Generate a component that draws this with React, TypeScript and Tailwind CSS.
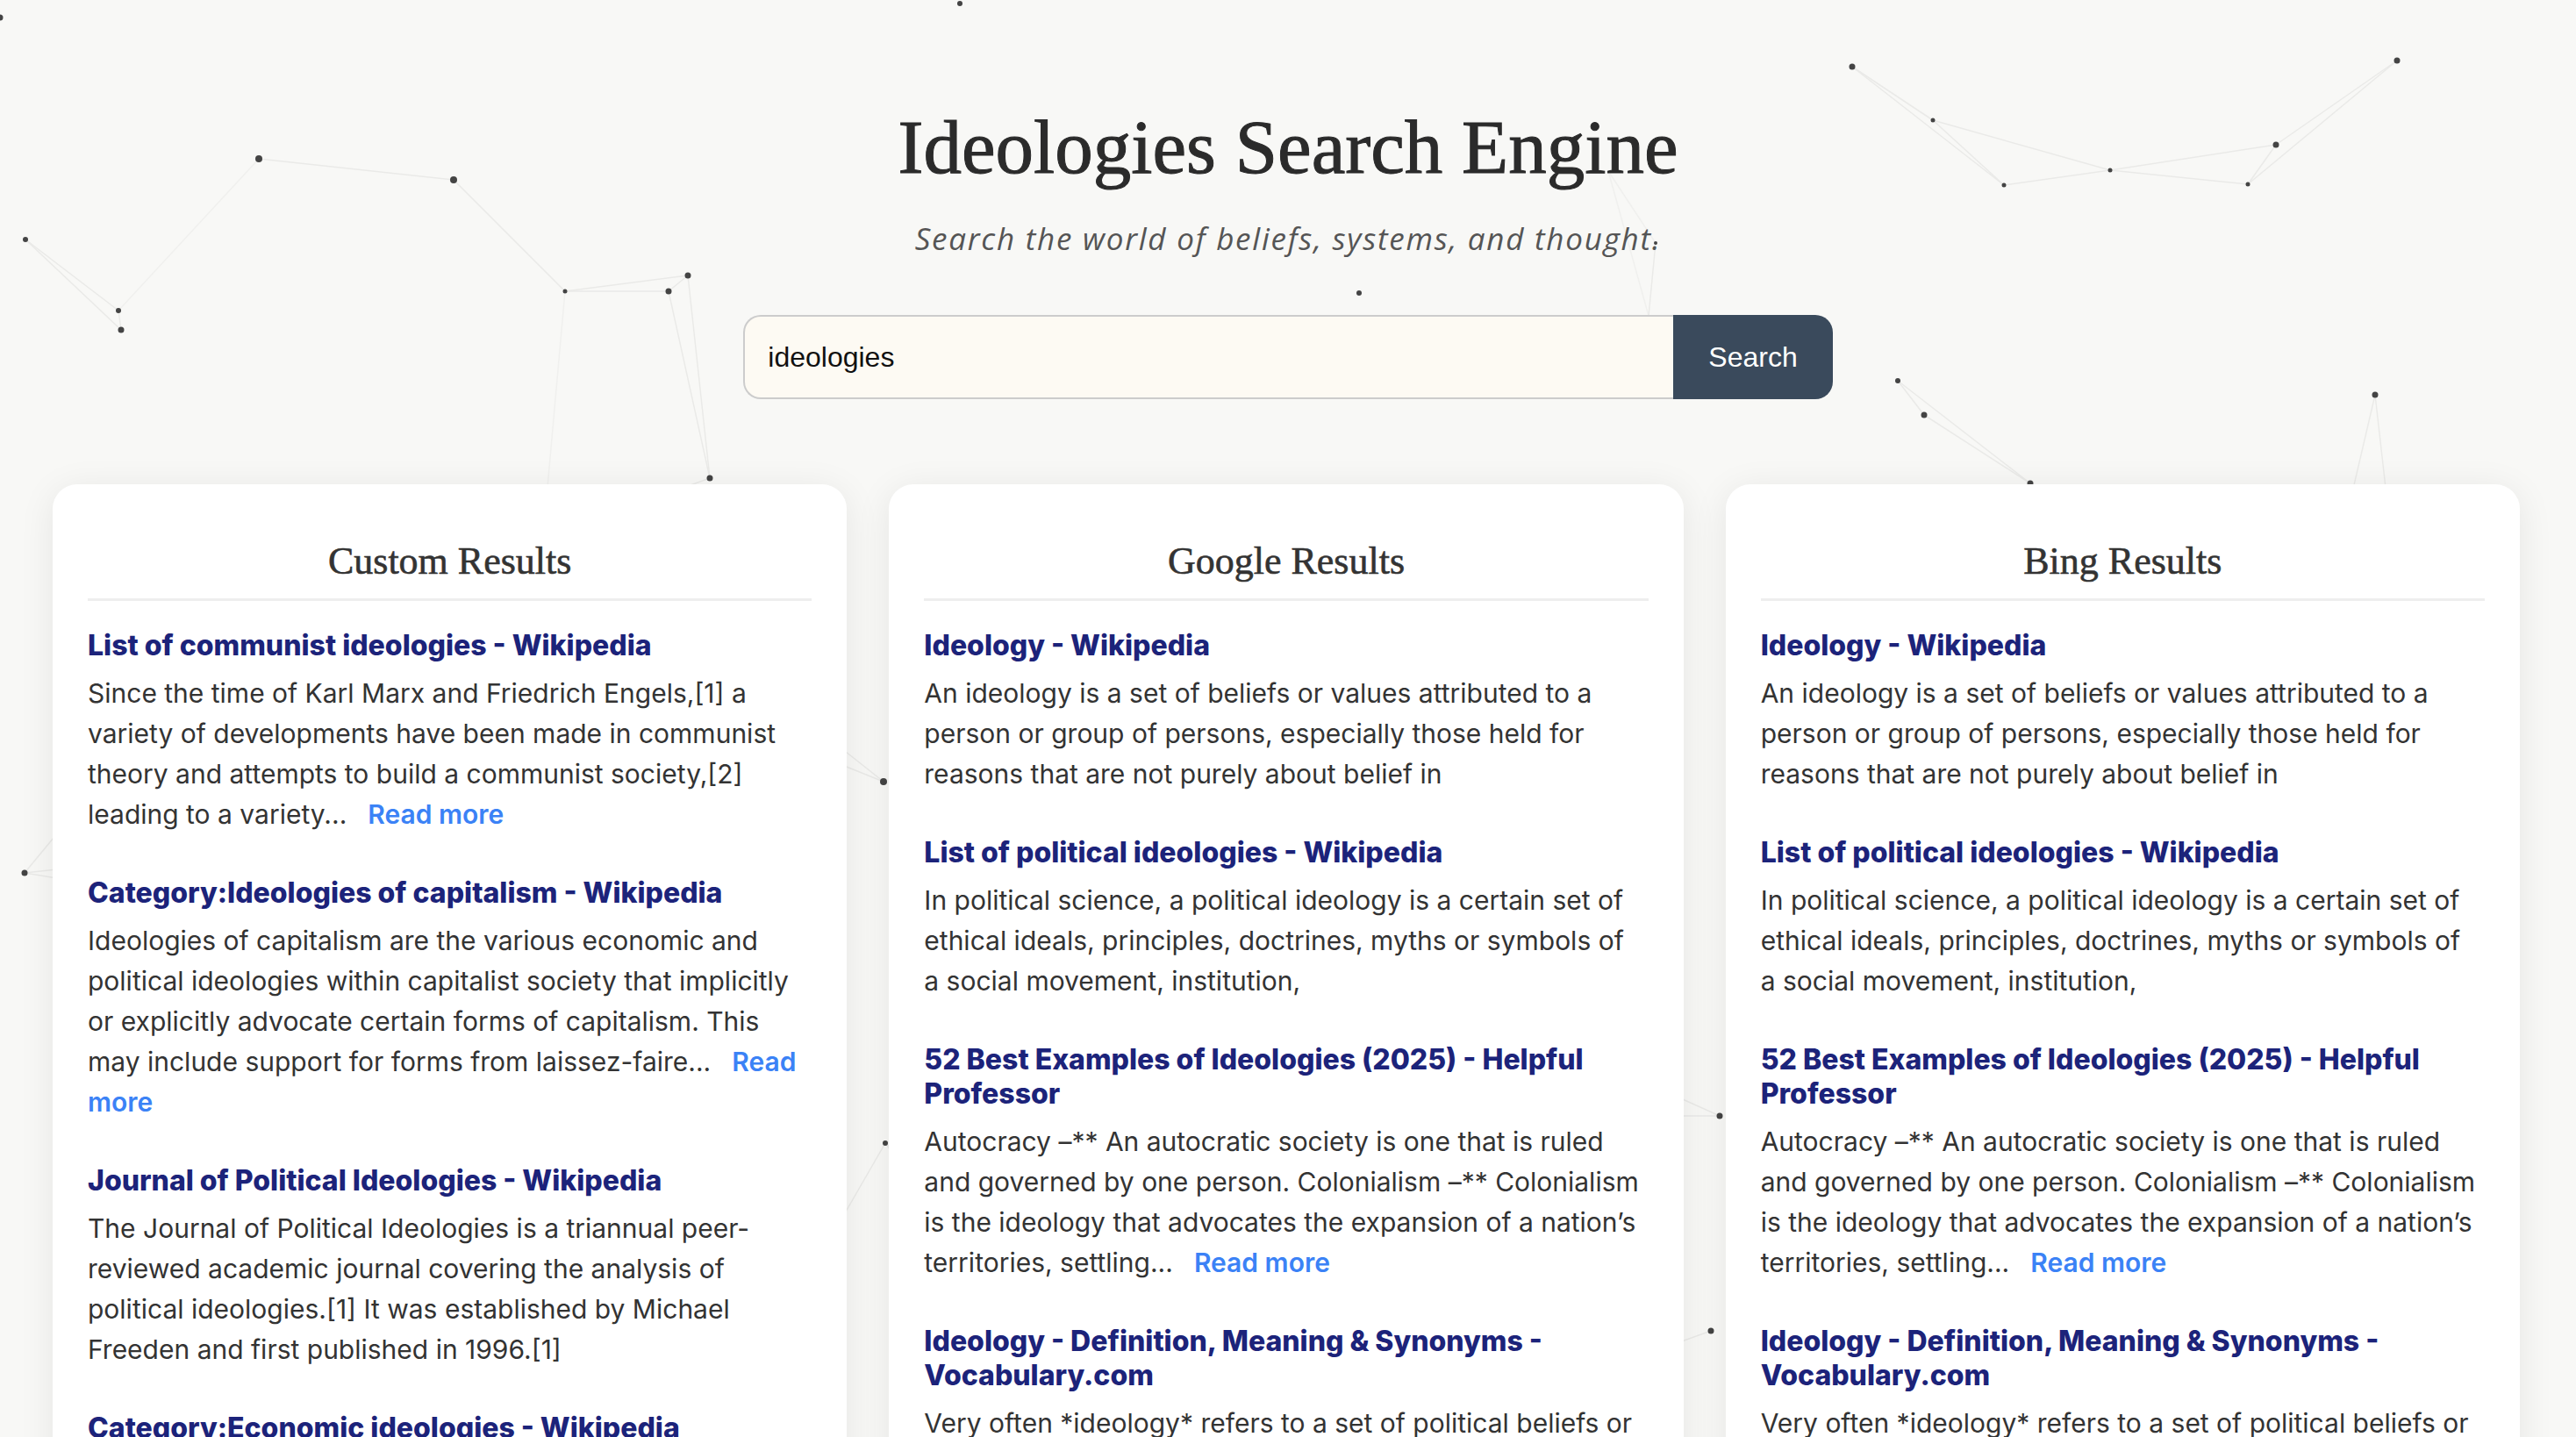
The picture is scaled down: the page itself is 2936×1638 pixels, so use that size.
type Result = {
  title: string;
  snippet: string;
  more?: boolean;
};

const customResults: Result[] = [
  {
    title: "List of communist ideologies - Wikipedia",
    snippet:
      "Since the time of Karl Marx and Friedrich Engels,[1] a variety of developments have been made in communist theory and attempts to build a communist society,[2] leading to a variety...",
    more: true,
  },
  {
    title: "Category:Ideologies of capitalism - Wikipedia",
    snippet:
      "Ideologies of capitalism are the various economic and political ideologies within capitalist society that implicitly or explicitly advocate certain forms of capitalism. This may include support for forms from laissez-faire...",
    more: true,
  },
  {
    title: "Journal of Political Ideologies - Wikipedia",
    snippet:
      "The Journal of Political Ideologies is a triannual peer-reviewed academic journal covering the analysis of political ideologies.[1] It was established by Michael Freeden and first published in 1996.[1]",
  },
  {
    title: "Category:Economic ideologies - Wikipedia",
    snippet:
      "This category contains articles about economic ideologies, schools of economic thought and the political movements built around them.",
  },
];

const webResults: Result[] = [
  {
    title: "Ideology - Wikipedia",
    snippet:
      "An ideology is a set of beliefs or values attributed to a person or group of persons, especially those held for reasons that are not purely about belief in",
  },
  {
    title: "List of political ideologies - Wikipedia",
    snippet:
      "In political science, a political ideology is a certain set of ethical ideals, principles, doctrines, myths or symbols of a\u00a0social movement, institution,",
  },
  {
    title: "52 Best Examples of Ideologies (2025) - Helpful Professor",
    snippet:
      "Autocracy –** An autocratic society is one that is ruled and governed by one person. Colonialism –** Colonialism is the ideology that advocates the expansion of a nation’s territories, settling...",
    more: true,
  },
  {
    title: "Ideology - Definition, Meaning & Synonyms - Vocabulary.com",
    snippet:
      "Very often *ideology* refers to a set of political beliefs or a set of ideas that characterize a particular culture.",
  },
];

// background constellation, canvas coordinates
const nodes: [number, number, number][] = [
  [1094, 4, 3], [295, 181, 4], [517, 205, 4], [29, 273, 3], [135, 354, 3],
  [138, 376, 3.5], [644, 332, 2.5], [762, 332, 3.5], [784, 314, 3.5], [809, 545, 3.5],
  [1549, 334, 3], [1887, 277, 2], [2111, 76, 3.5], [2203, 137, 2.5], [2284, 211, 2.5],
  [2405, 194, 2.5], [2562, 210, 2.5], [2594, 165, 3.5], [2732, 69, 3.5], [2163, 434, 3],
  [2193, 473, 3.5], [2314, 551, 3.5], [2707, 450, 3.5], [28, 995, 3.5], [1007, 891, 4],
  [1009, 1303, 3], [1960, 1272, 3.5], [1950, 1517, 3.5], [0, 20, 3.5],
];

const links: [number, number, number, number][] = [
  [295, 181, 517, 205], [517, 205, 644, 332], [644, 332, 762, 332], [644, 332, 784, 314],
  [784, 314, 762, 332], [29, 273, 135, 354], [29, 273, 138, 376], [135, 354, 138, 376],
  [762, 332, 809, 545], [784, 314, 809, 545], [809, 545, 740, 570],
  [1887, 277, 1879, 360],
  [2111, 76, 2203, 137], [2111, 76, 2284, 211], [2203, 137, 2284, 211], [2203, 137, 2405, 194],
  [2284, 211, 2405, 194], [2405, 194, 2562, 210], [2405, 194, 2594, 165], [2594, 165, 2562, 210],
  [2594, 165, 2732, 69], [2562, 210, 2732, 69], [2163, 434, 2193, 473], [2163, 434, 2314, 551],
  [2193, 473, 2314, 551], [2707, 450, 2672, 600], [2707, 450, 2724, 600],
  [28, 995, 90, 920], [28, 995, 120, 985], [28, 995, 120, 1010],
  [1007, 891, 930, 830], [1007, 891, 930, 860], [1009, 1303, 930, 1440], [1009, 1303, 1080, 1360],
  [1009, 1303, 1080, 1400], [1960, 1272, 1900, 1245], [1960, 1272, 1900, 1272], [1950, 1517, 1900, 1535],
  [2314, 551, 2280, 600],
];

const faintLinks: [number, number, number, number][] = [
  [295, 181, 135, 354], [644, 332, 620, 600], [1833, 195, 1887, 277], [1833, 195, 1879, 360],
];

function Network() {
  return (
    <svg
      className="absolute top-0 left-0 pointer-events-none"
      width={2936}
      height={1638}
      viewBox="0 0 2936 1638"
    >
      {faintLinks.map(([x1, y1, x2, y2], i) => (
        <line key={"f" + i} x1={x1} y1={y1} x2={x2} y2={y2} stroke="#f0f0ee" strokeWidth={1.5} />
      ))}
      {links.map(([x1, y1, x2, y2], i) => (
        <line key={i} x1={x1} y1={y1} x2={x2} y2={y2} stroke="#eaeae8" strokeWidth={1.5} />
      ))}
      {nodes.map(([cx, cy, r], i) => (
        <circle key={i} cx={cx} cy={cy} r={r} fill="#444" />
      ))}
    </svg>
  );
}

function ResultCard({ heading, results }: { heading: string; results: Result[] }) {
  return (
    <div className="bg-white rounded-[28px] shadow-[0_6px_40px_rgba(0,0,0,0.08)] px-[40px] pt-[55px] pb-[40px]">
      <h2 className="text-center text-[44px] leading-[66px] text-[#333] font-['Liberation_Serif',serif] [-webkit-text-stroke:0.6px_#333] pb-[9px] border-b-[3px] border-[#eeeeee]">
        {heading}
      </h2>
      <div className="mt-[31px] flex flex-col gap-[47px]">
        {results.map((r) => (
          <div key={r.title}>
            <a className="block text-[32px] leading-[39px] font-extrabold text-[#1c237a] font-['Inter',sans-serif]">
              {r.title}
            </a>
            <p className="mt-[12px] text-[30px] leading-[46px] text-[#333] font-['Inter',sans-serif]">
              {r.snippet}
              {r.more && (
                <span className="ml-6 font-semibold text-[#3b82f6]">Read more</span>
              )}
            </p>
          </div>
        ))}
      </div>
    </div>
  );
}

export default function App() {
  return (
    <div className="relative min-h-screen overflow-hidden bg-[#f8f8f6]">
      <Network />
      <div className="relative flex flex-col items-center">
        <h1 className="mt-[124px] text-[87px] leading-none text-[#2b2b2b] font-['Liberation_Serif',serif] [-webkit-text-stroke:1px_#2b2b2b]">
          Ideologies Search Engine
        </h1>
        <p className="mt-[43px] text-[35px] leading-none italic tracking-[0.05em] text-[#555] font-['Open_Sans',sans-serif]">
          Search the world of beliefs, systems, and thought.
        </p>
        <div className="mt-[70px] flex h-[96px]">
          <input
            readOnly
            value="ideologies"
            className="w-[1060px] h-full rounded-l-[20px] border-2 border-r-0 border-[#cccccc] bg-[#fdfaf3] px-[26px] text-[32px] text-[#111] font-['Liberation_Sans',sans-serif] outline-none"
          />
          <button className="h-full rounded-r-[20px] bg-[#3a4a5c] px-[40px] text-[32px] text-white font-['Liberation_Sans',sans-serif]">
            Search
          </button>
        </div>
      </div>
      <div className="relative mt-[97px] grid grid-cols-3 gap-[48px] pl-[60px] pr-[64px] pb-[60px]">
        <ResultCard heading="Custom Results" results={customResults} />
        <ResultCard heading="Google Results" results={webResults} />
        <ResultCard heading="Bing Results" results={webResults} />
      </div>
    </div>
  );
}
